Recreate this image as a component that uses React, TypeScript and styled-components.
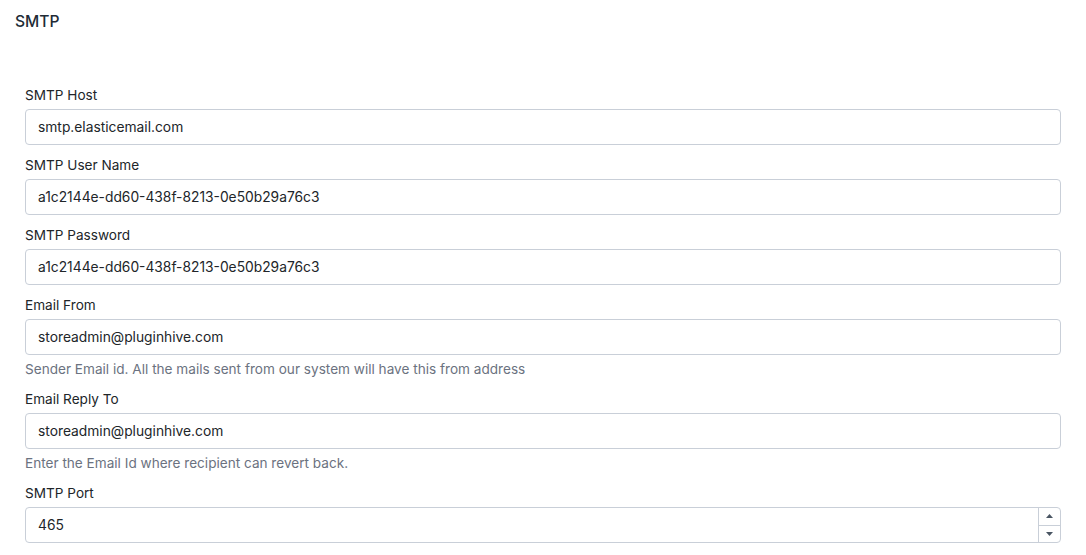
import React from "react";
import styled, { createGlobalStyle } from "styled-components";

const GlobalStyle = createGlobalStyle`
	html, body {
		margin: 0;
		padding: 0;
		background: #ffffff;
	}
	body {
		font-family: Inter, "Noto Sans", "Liberation Sans", sans-serif;
		color: #212529;
		-webkit-font-smoothing: antialiased;
	}
`;

type FieldProps = {
	label: string;
	value: string;
	help?: string;
	number?: boolean;
};

function Field({ label, value, help, number }: FieldProps) {
	return (
		<FieldWrapper>
			<Label>{label}</Label>
			<InputBox>
				<Input defaultValue={value} readOnly />
				{number && (
					<Spinner>
						<SpinBtn>
							<svg width="7" height="4" viewBox="0 0 7 4">
								<path d="M0 4 L3.5 0 L7 4 Z" fill="#4a5563" />
							</svg>
						</SpinBtn>
						<SpinBtn bottom>
							<svg width="7" height="4" viewBox="0 0 7 4">
								<path d="M0 0 L3.5 4 L7 0 Z" fill="#4a5563" />
							</svg>
						</SpinBtn>
					</Spinner>
				)}
			</InputBox>
			{help && <Help>{help}</Help>}
		</FieldWrapper>
	);
}

export default function App() {
	return (
		<Page>
			<GlobalStyle />
			<Title>SMTP</Title>
			<Form>
				<Field label="SMTP Host" value="smtp.elasticemail.com" />
				<Field
					label="SMTP User Name"
					value="a1c2144e-dd60-438f-8213-0e50b29a76c3"
				/>
				<Field
					label="SMTP Password"
					value="a1c2144e-dd60-438f-8213-0e50b29a76c3"
				/>
				<Field
					label="Email From"
					value="storeadmin@pluginhive.com"
					help="Sender Email id. All the mails sent from our system will have this from address"
				/>
				<Field
					label="Email Reply To"
					value="storeadmin@pluginhive.com"
					help="Enter the Email Id where recipient can revert back."
				/>
				<Field label="SMTP Port" value="465" number />
			</Form>
		</Page>
	);
}

const Page = styled.div`
	width: 1086px;
	height: 555px;
	overflow: hidden;
	box-sizing: border-box;
	padding: 12px 0 0 15px;
`;

const Title = styled.h2`
	margin: 0;
	font-size: 15.6px;
	font-weight: 500;
	line-height: 20px;
	color: #212b36;
`;

const Form = styled.div`
	display: flex;
	flex-direction: column;
	gap: 10px;
	padding: 53px 25px 0 10px;
`;

const FieldWrapper = styled.div`
	display: flex;
	flex-direction: column;
	gap: 4px;
`;

const Label = styled.label`
	font-size: 13.6px;
	line-height: 20px;
	color: #212529;
`;

const InputBox = styled.div`
	position: relative;
	height: 36px;
`;

const Input = styled.input`
	width: 100%;
	height: 36px;
	box-sizing: border-box;
	border: 1px solid #c9cfd8;
	border-radius: 4px;
	padding: 0 12px;
	font-family: inherit;
	font-size: 13.8px;
	color: #212529;
	background: #fff;
	outline: none;
`;

const Spinner = styled.div`
	position: absolute;
	top: 1px;
	right: 1px;
	bottom: 1px;
	width: 21px;
	border-left: 1px solid #c9cfd8;
	display: flex;
	flex-direction: column;
`;

const SpinBtn = styled.div<{ bottom?: boolean }>`
	flex: 1;
	display: flex;
	align-items: center;
	justify-content: center;
	border-top: ${(p) => (p.bottom ? "1px solid #c9cfd8" : "none")};
`;

const Help = styled.div`
	font-size: 13.6px;
	line-height: 20px;
	color: #6b7280;
`;
